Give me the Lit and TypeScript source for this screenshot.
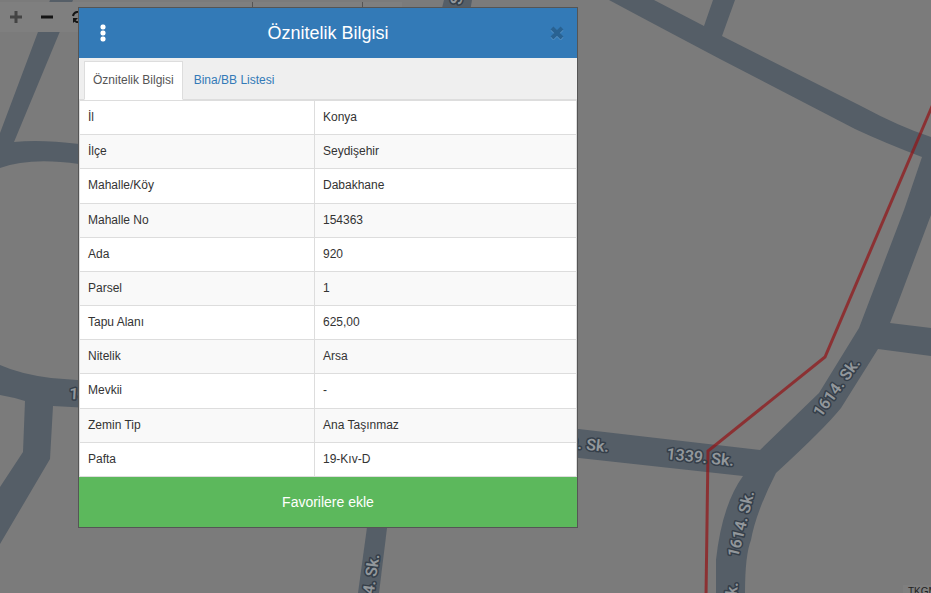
import { LitElement, html, css, svg } from "lit";
import { customElement, state } from "lit/decorators.js";

const FIELDS: [string, string][] = [
  ["İl", "Konya"],
  ["İlçe", "Seydişehir"],
  ["Mahalle/Köy", "Dabakhane"],
  ["Mahalle No", "154363"],
  ["Ada", "920"],
  ["Parsel", "1"],
  ["Tapu Alanı", "625,00"],
  ["Nitelik", "Arsa"],
  ["Mevkii", "-"],
  ["Zemin Tip", "Ana Taşınmaz"],
  ["Pafta", "19-Kıv-D"],
];

@customElement("parcel-map")
class ParcelMap extends LitElement {
  static styles = css`
    :host {
      display: block;
      overflow: hidden;
      background: #7b7b7b;
    }
    svg {
      display: block;
      width: 100%;
      height: 100%;
    }
    .road {
      fill: #555e67;
    }
    .parcel {
      fill: none;
      stroke: #931315;
      stroke-opacity: 0.7;
      stroke-width: 3;
    }
    .label {
      font: 600 16px Roboto, sans-serif;
      fill: #92979b;
      stroke: #353f4a;
      stroke-width: 3;
      stroke-linejoin: round;
      paint-order: stroke;
    }
  `;

  render() {
    return html`
      <svg viewBox="0 0 931 593" preserveAspectRatio="xMinYMin slice" aria-label="Harita">
        ${svg`
        <g class="road">
          <path d="M50 0H73L14 142Q40 139 79 144V164Q30 157 0 168V133Z" />
          <path d="M0 365Q20 374 51 378L90 381V408L53 406L50 459L0 544V487L23 452L25 401Q12 397 0 395Z" />
          <path d="M368 520H388L379 593H358Z" />
          <path d="M444 0H472L470 12H441Z" />
          <path d="M609 0H654L704 26L713 0H735L722 36L861 106Q900 127 931 137V215L899 300L890 323L931 328V356L878 349L841 408Q825 428 776 473Q756 512 751 540Q745 555 745 593H716V560Q722 505 743 476L570 457V428L760 450L819 393L859 328L904 210L922 157Q885 143 855 129L720 59Q650 22 609 0Z" />
        </g>
        <polyline class="parcel" points="936,97 825,357 708,451 706,597" />
        <g class="label">
          <text transform="translate(666 459) rotate(6)">1339. Sk.</text>
          <text transform="translate(541 445) rotate(6)">1339. Sk.</text>
          <text transform="translate(69 399) rotate(3)">1339. Sk.</text>
          <text transform="translate(821 418) rotate(-54)">1614. Sk.</text>
          <text transform="translate(738 558) rotate(-76)">1614. Sk.</text>
          <text transform="translate(731 650) rotate(-84)">1614. Sk.</text>
          <text transform="translate(370 622) rotate(-82)">1614. Sk.</text>
          <text transform="translate(455 50) rotate(-82)">1614. Sk.</text>
        </g>`}
      </svg>
    `;
  }
}

@customElement("app-root")
class AppRoot extends LitElement {
  @state() private tab = 0;

  static styles = css`
    :host {
      display: block;
      position: relative;
      min-height: 100vh;
      overflow: hidden;
      font: 12px/17px "Liberation Sans", Arial, sans-serif;
      color: #333;
    }
    button {
      font: inherit;
      border: 0;
      margin: 0;
      padding: 0;
      background: none;
      cursor: pointer;
    }
    .map {
      position: absolute;
      inset: 0;
    }
    .toolbar {
      position: absolute;
      top: 2px;
      left: 0;
      display: flex;
      background: #7f7f7f;
    }
    .tool {
      display: grid;
      place-items: center;
      width: 31px;
      height: 30px;
    }
    .search {
      width: 109px;
      margin: 0 39px 0 159px;
      border: solid #555;
      border-width: 0 1px;
    }
    .credit {
      position: absolute;
      right: 0;
      bottom: 0;
      width: 23px;
      height: 8px;
      padding-left: 5px;
      overflow: hidden;
      background: #7f7f7f;
      color: #222;
      font-size: 10px;
      line-height: 14px;
      white-space: nowrap;
    }
    .dialog {
      position: relative;
      width: 498px;
      margin: 7px 0 0 78px;
      border: 1px solid #555;
      background: #fff;
    }
    .header {
      display: grid;
      grid-template-columns: 48px 1fr 48px;
      align-items: center;
      height: 50px;
      background: #337ab7;
      color: #fff;
    }
    .header svg {
      display: block;
      margin: auto;
    }
    .close {
      padding-left: 8px;
    }
    .title {
      margin: 0;
      font-size: 18px;
      font-weight: 400;
      line-height: 20px;
      text-align: center;
    }
    .tabs {
      display: flex;
      gap: 2px;
      padding: 3px 5px 0;
      background: #efefef;
      border-bottom: 1px solid #ddd;
    }
    .tab {
      padding: 10px 8px;
      margin-bottom: -1px;
      border: 1px solid transparent;
      color: #337ab7;
    }
    .tab.active {
      color: #555;
      background: #fff;
      border-color: #ddd #ddd transparent;
    }
    .fields {
      width: 100%;
      height: 377px;
      border-collapse: collapse;
      table-layout: fixed;
    }
    .fields th,
    .fields td {
      padding: 8px;
      border: 1px solid #ddd;
      font-weight: 400;
      text-align: left;
      vertical-align: top;
    }
    .fields th {
      width: 218px;
    }
    .fields tr:nth-child(even) {
      background: #f9f9f9;
    }
    .favorite {
      display: block;
      width: 100%;
      padding: 15px;
      background: #5cb85c;
      color: #fff;
      font-size: 14px;
      line-height: 20px;
    }
  `;

  render() {
    const tabs = ["Öznitelik Bilgisi", "Bina/BB Listesi"];
    return html`
      <parcel-map class="map"></parcel-map>
      <div class="toolbar">
        <button class="tool" aria-label="Yakınlaştır">
          <svg width="12" height="12"><path d="M6 0V12M0 6H12" stroke="#444" stroke-width="3" /></svg>
        </button>
        <button class="tool" aria-label="Uzaklaştır">
          <svg width="12" height="12"><path d="M0 6H12" stroke="#141414" stroke-width="3" /></svg>
        </button>
        <button class="tool" aria-label="Yenile">
          <svg width="12" height="12" fill="none" stroke="#141414" stroke-width="2">
            <path d="M1 5A5 5 0 0 1 10 3M11 7A5 5 0 0 1 2 9" />
            <path d="M11 0V5H6ZM1 12V7H6Z" fill="#141414" stroke="none" />
          </svg>
        </button>
        <div class="search"></div>
      </div>
      <div class="credit">TKGM</div>
      <section class="dialog" role="dialog" aria-labelledby="title">
        <header class="header">
          <button aria-label="Menü">
            <svg width="6" height="18" fill="#fff">
              <rect x="0.5" y="0.5" width="5" height="5" rx="2" />
              <rect x="0.5" y="6.5" width="5" height="5" rx="2" />
              <rect x="0.5" y="12.5" width="5" height="5" rx="2" />
            </svg>
          </button>
          <h4 class="title" id="title">${tabs[0]}</h4>
          <button class="close" aria-label="Kapat">
            <svg width="14" height="14" fill="none" stroke-width="4">
              <path d="M2 3L12 13M12 3L2 13" stroke="#5c95c6" />
              <path d="M2 2L12 12M12 2L2 12" stroke="#296292" />
            </svg>
          </button>
        </header>
        <div class="tabs" role="tablist">
          ${tabs.map(
            (name, i) => html`<button
              class="tab ${i === this.tab ? "active" : ""}"
              role="tab"
              aria-selected=${i === this.tab}
              @click=${() => (this.tab = i)}
            >${name}</button>`
          )}
        </div>
        <table class="fields">
          <tbody>
            ${FIELDS.map(([k, v]) => html`<tr><th scope="row">${k}</th><td>${v}</td></tr>`)}
          </tbody>
        </table>
        <button class="favorite">Favorilere ekle</button>
      </section>
    `;
  }
}
